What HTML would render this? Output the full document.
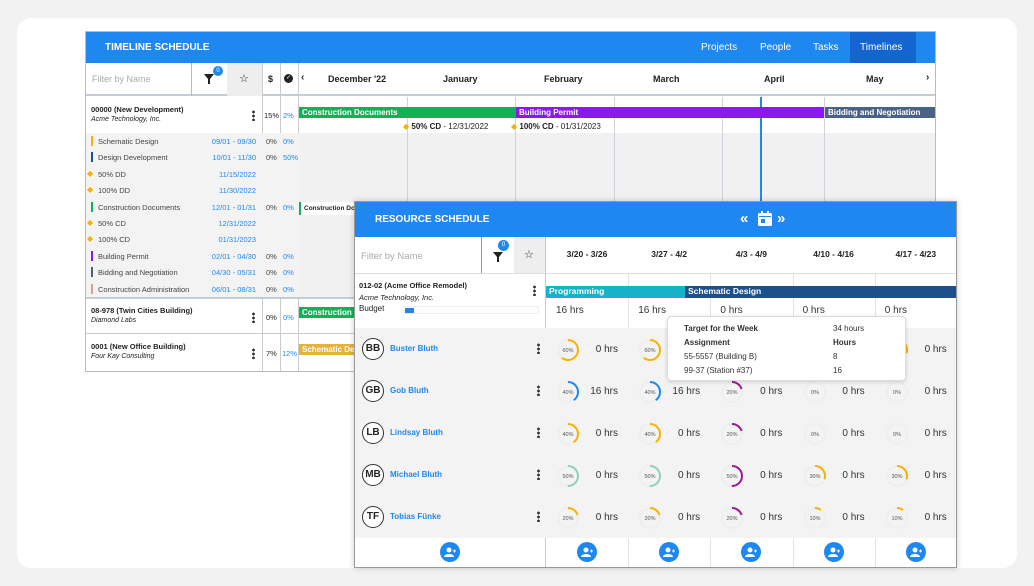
<!DOCTYPE html>
<html><head><meta charset="utf-8"><style>
*{box-sizing:border-box;margin:0;padding:0}
body{width:1034px;height:586px;background:#f2f2f2;font-family:"Liberation Sans",sans-serif;position:relative;overflow:hidden;color:#222}
.a{position:absolute}
.card{left:17px;top:18px;width:1000px;height:550px;background:#fff;border-radius:14px}
.tl{left:85px;top:31px;width:851px;height:341px;background:#fff;border:1px solid #bbb;overflow:hidden}
.hdr{background:#1e88f0;color:#fff}
.b{font-weight:bold}
.sm{font-size:8px}
.blue{color:#1e88f0}
.vl{width:1px;background:#ccd3dc}
.bar{height:11px;color:#fff;font-size:8px;font-weight:bold;line-height:11px;padding-left:3px;white-space:nowrap;overflow:hidden}
.rs{left:354px;top:201px;width:603px;height:367px;background:#fff;border:1px solid #999;box-shadow:0 0 6px rgba(0,0,0,.2);overflow:hidden}
.av{width:22px;height:22px;border:1px solid #333;border-radius:50%;font-size:10px;font-weight:bold;text-align:center;line-height:20px;background:#fff}
.add{width:20px;height:20px;border-radius:50%;background:#1e88f0}
.dots{width:3px;height:11px;background:radial-gradient(circle,#333 1.3px,transparent 1.5px) 0 0/3px 4px repeat-y}
.hrs{font-size:10px;color:#333}
</style></head><body>
<div class="a card"></div>

<!-- TIMELINE -->
<div class="a tl">
 <div class="a hdr" style="left:0;top:0;width:849px;height:31px">
  <div class="a b" style="left:19px;top:10px;font-size:10px">TIMELINE SCHEDULE</div>
  <div class="a" style="left:615px;top:10px;font-size:10px">Projects</div>
  <div class="a" style="left:674px;top:10px;font-size:10px">People</div>
  <div class="a" style="left:727px;top:10px;font-size:10px">Tasks</div>
  <div class="a" style="left:764px;top:0;width:66px;height:31px;background:#1565d0"></div>
  <div class="a" style="left:774px;top:10px;font-size:10px">Timelines</div>
 </div>
 <div class="a" style="left:0;top:31px;width:849px;height:33px;border-bottom:2px solid #c6ccd4"></div>
 <div class="a" style="left:6px;top:42px;font-size:9px;color:#aaa">Filter by Name</div>
 <div class="a" style="left:105px;top:31px;width:1px;height:33px;background:#bbb"></div>
 <div class="a" style="left:141px;top:31px;width:35px;height:33px;background:#eee"></div>
 <svg class="a" style="left:118px;top:42px" width="10" height="10"><path d="M0 0h10L6 5v5H4V5z" fill="#222"/></svg>
 <div class="a" style="left:127px;top:34px;width:10px;height:10px;border-radius:50%;background:#1e88f0;color:#fff;font-size:6px;text-align:center;line-height:10px">0</div>
 <div class="a" style="left:153px;top:40px;font-size:11px">☆</div>
 <div class="a" style="left:176px;top:31px;width:1px;height:310px;background:#ccc"></div>
 <div class="a b" style="left:182px;top:42px;font-size:9px">$</div>
 <div class="a" style="left:194px;top:31px;width:1px;height:310px;background:#ccc"></div>
 <div class="a" style="left:198px;top:42px;width:9px;height:9px;border-radius:50%;background:#222;color:#fff;font-size:6px;line-height:9px;text-align:center">✓</div>
 <div class="a" style="left:212px;top:31px;width:1px;height:310px;background:#ccc"></div>
 <div class="a b" style="left:215px;top:40px;font-size:10px">‹</div>
 <div class="a b" style="left:242px;top:42px;font-size:9px">December '22</div>
 <div class="a b" style="left:357px;top:42px;font-size:9px">January</div>
 <div class="a b" style="left:458px;top:42px;font-size:9px">February</div>
 <div class="a b" style="left:567px;top:42px;font-size:9px">March</div>
 <div class="a b" style="left:678px;top:42px;font-size:9px">April</div>
 <div class="a b" style="left:780px;top:42px;font-size:9px">May</div>
 <div class="a b" style="left:840px;top:40px;font-size:10px">›</div>
 <!-- body -->
 <div class="a" style="left:0;top:101px;width:849px;height:165px;background:#f3f3f3"></div>
 <div class="a" style="left:213px;top:101px;width:636px;height:165px;background:#f1f1f1"></div>
 <div class="a" style="left:0;top:265px;width:849px;height:2px;background:#c6ccd4"></div>
 <div class="a" style="left:0;top:301px;width:849px;height:1px;background:#c6ccd4"></div>
 <div class="a vl" style="left:321px;top:65px;height:235px"></div>
 <div class="a vl" style="left:429px;top:65px;height:235px"></div>
 <div class="a vl" style="left:528px;top:65px;height:235px"></div>
 <div class="a vl" style="left:636px;top:65px;height:235px"></div>
 <div class="a vl" style="left:738px;top:65px;height:235px"></div>
 <div class="a" style="left:674px;top:65px;width:2px;height:110px;background:#1e88f0"></div>
 <div class="a bar" style="left:213px;top:75px;width:217px;background:#10b256">Construction Documents</div>
 <div class="a bar" style="left:430px;top:75px;width:308px;background:#8a19f0">Building Permit</div>
 <div class="a bar" style="left:739px;top:75px;width:110px;background:#4a6384">Bidding and Negotiation</div>
 <div class="a sm" style="left:317px;top:90px"><span style="color:#f8b100">◆</span> <b>50% CD</b> - 12/31/2022</div>
 <div class="a sm" style="left:425px;top:90px"><span style="color:#f8b100">◆</span> <b>100% CD</b> - 01/31/2023</div>
 <div class="a" style="left:213px;top:170px;width:55px;height:13px;background:#fff;border-left:2px solid #10b256;font-size:6.5px;font-weight:bold;line-height:13px;padding-left:3px;overflow:hidden;white-space:nowrap">Construction Do</div>
 <div class="a bar" style="left:213px;top:275px;width:55px;background:#10b256">Construction</div>
 <div class="a bar" style="left:213px;top:312px;width:55px;background:#e5b03c">Schematic De</div>
 <!-- left rows -->
 <div class="a b" style="left:5px;top:73px;font-size:7.5px">00000 (New Development)</div>
 <div class="a" style="left:5px;top:84px;font-size:7px;font-style:italic">Acme Technology, Inc.</div>
 <div class="a dots" style="left:166px;top:78px"></div>
 <div class="a" style="left:178px;top:79px;font-size:7.5px">15%</div><div class="a blue" style="left:197px;top:79px;font-size:7.5px">2%</div>
 <div class="a b" style="left:5px;top:274px;font-size:7.5px">08-978 (Twin Cities Building)</div>
 <div class="a" style="left:5px;top:285px;font-size:7px;font-style:italic">Diamond Labs</div>
 <div class="a dots" style="left:166px;top:280px"></div>
 <div class="a" style="left:180px;top:281px;font-size:7.5px">0%</div><div class="a blue" style="left:197px;top:281px;font-size:7.5px">0%</div>
 <div class="a b" style="left:5px;top:310px;font-size:7.5px">0001 (New Office Building)</div>
 <div class="a" style="left:5px;top:321px;font-size:7px;font-style:italic">Four Kay Consulting</div>
 <div class="a dots" style="left:166px;top:316px"></div>
 <div class="a" style="left:180px;top:317px;font-size:7.5px">7%</div><div class="a blue" style="left:196px;top:317px;font-size:7.5px">12%</div>
 <div id="sub"></div>
</div>

<!-- RESOURCE -->
<div class="a rs">
 <div class="a hdr" style="left:0;top:0;width:601px;height:35px">
  <div class="a b" style="left:20px;top:12px;font-size:10px">RESOURCE SCHEDULE</div>
  <div class="a b" style="left:385px;top:8px;font-size:15px">«</div>
  <svg class="a" style="left:403px;top:9px" width="14" height="15"><rect x="0" y="2" width="14" height="13" rx="1.5" fill="#fff"/><rect x="3" y="0" width="2" height="4" fill="#fff"/><rect x="9" y="0" width="2" height="4" fill="#fff"/><rect x="1" y="5" width="12" height="1" fill="#1e88f0"/><rect x="3" y="8" width="4" height="4" fill="#1e88f0"/></svg>
  <div class="a b" style="left:422px;top:8px;font-size:15px">»</div>
 </div>
 <div class="a" style="left:0;top:35px;width:601px;height:37px;border-bottom:1px solid #ddd"></div>
 <div class="a" style="left:6px;top:49px;font-size:9.5px;color:#aaa">Filter by Name</div>
 <div class="a" style="left:126px;top:35px;width:1px;height:36px;background:#999"></div>
 <div class="a" style="left:159px;top:35px;width:31px;height:36px;background:#eee"></div>
 <svg class="a" style="left:138px;top:50px" width="10" height="10"><path d="M0 0h10L6 5v5H4V5z" fill="#222"/></svg>
 <div class="a" style="left:143px;top:38px;width:11px;height:11px;border-radius:50%;background:#1e88f0;color:#fff;font-size:6px;text-align:center;line-height:11px">0</div>
 <div class="a" style="left:169px;top:46px;font-size:11px">☆</div>
 <div class="a" style="left:190px;top:35px;width:1px;height:330px;background:#ccc"></div>
 <div id="wk"></div>
 <div class="a b" style="left:4px;top:79px;font-size:7.5px">012-02 (Acme Office Remodel)</div>
 <div class="a" style="left:4px;top:91px;font-size:7.5px;font-style:italic">Acme Technology, Inc.</div>
 <div class="a" style="left:4px;top:102px;font-size:8px">Budget</div>
 <div class="a" style="left:48px;top:104px;width:136px;height:8px;border:1px solid #eee"></div>
 <div class="a" style="left:50px;top:106px;width:9px;height:5px;background:#1e88f0"></div>
 <div class="a dots" style="left:178px;top:83px"></div>
 <div class="a" style="left:0;top:126px;width:601px;height:210px;background:#f3f3f3"></div>
 <div class="a bar" style="left:191px;top:84px;width:139px;height:12px;background:#17b2c9;font-size:8.5px">Programming</div>
 <div class="a bar" style="left:330px;top:84px;width:271px;height:12px;background:#1d4f8a;font-size:8.5px">Schematic Design</div>
 <div id="grid"></div>
 <!-- tooltip -->
 <div class="a" style="left:312px;top:114px;width:239px;height:65px;background:#fff;border:1px solid #ddd;border-radius:4px;box-shadow:0 1px 4px rgba(0,0,0,.15);font-size:8px;color:#333">
  <div class="a b" style="left:16px;top:7px">Target for the Week</div><div class="a" style="left:165px;top:7px">34 hours</div>
  <div class="a b" style="left:16px;top:21px">Assignment</div><div class="a b" style="left:165px;top:21px">Hours</div>
  <div class="a" style="left:16px;top:35px">55-5557 (Building B)</div><div class="a" style="left:165px;top:35px">8</div>
  <div class="a" style="left:16px;top:49px">99-37 (Station #37)</div><div class="a" style="left:165px;top:49px">16</div>
 </div>
</div>

<script>
var s='',rows=[["Schematic Design","#f8b100","09/01 - 09/30",1,"0%"],["Design Development","#1d4f8a","10/01 - 11/30",1,"50%"],["50% DD","","11/15/2022",0],["100% DD","","11/30/2022",0],["Construction Documents","#10b256","12/01 - 01/31",1,"0%"],["50% CD","","12/31/2022",0],["100% CD","","01/31/2023",0],["Building Permit","#8a19f0","02/01 - 04/30",1,"0%"],["Bidding and Negotiation","#4a6384","04/30 - 05/31",1,"0%"],["Construction Administration","#d9a090","06/01 - 08/31",1,"0%"]];
rows.forEach(function(r,i){var y=104+i*16.4;
 if(r[1])s+='<div class="a" style="left:5px;top:'+(y)+'px;width:2px;height:10px;background:'+r[1]+'"></div><div class="a" style="left:12px;top:'+(y+1)+'px;font-size:7.5px;color:#444">'+r[0]+'</div>';
 else s+='<div class="a" style="left:1px;top:'+(y)+'px;font-size:8px;color:#f8b100">◆</div><div class="a" style="left:12px;top:'+(y+1)+'px;font-size:7.5px;color:#444">'+r[0]+'</div>';
 s+='<div class="a blue" style="right:679px;top:'+(y+1)+'px;font-size:7.5px;white-space:nowrap">'+r[2]+'</div>';
 if(r[3])s+='<div class="a" style="left:180px;top:'+(y+1)+'px;font-size:7.5px;color:#444">0%</div><div class="a blue" style="left:197px;top:'+(y+1)+'px;font-size:7.5px">'+r[4]+'</div>';});
document.getElementById('sub').outerHTML=s;
var w='',wk=["3/20 - 3/26","3/27 - 4/2","4/3 - 4/9","4/10 - 4/16","4/17 - 4/23"];
wk.forEach(function(t,i){var x=191+i*82.2;w+='<div class="a b" style="left:'+x+'px;top:47px;width:82px;text-align:center;font-size:8.5px">'+t+'</div>';if(i)w+='<div class="a" style="left:'+x+'px;top:72px;width:1px;height:294px;background:#e2e2e2"></div>';
 w+='<div class="a hrs" style="left:'+(x+10)+'px;top:103px">'+(i<2?'16 hrs':'0 hrs')+'</div>';});
document.getElementById('wk').outerHTML=w;
var ppl=[["BB","Buster Bluth"],["GB","Gob Bluth"],["LB","Lindsay Bluth"],["MB","Michael Bluth"],["TF","Tobias Fünke"]];
var d=[[[60,"#f8b100","0 hrs"],[60,"#f8b100",""],[0,"#eee",""],[0,"#eee",""],[30,"#f8b100","0 hrs"]],
[[40,"#1e88f0","16 hrs"],[40,"#1e88f0","16 hrs"],[20,"#9b1a8f","0 hrs"],[0,"#eee","0 hrs"],[0,"#eee","0 hrs"]],
[[40,"#f8b100","0 hrs"],[40,"#f8b100","0 hrs"],[20,"#9b1a8f","0 hrs"],[0,"#eee","0 hrs"],[0,"#eee","0 hrs"]],
[[50,"#8fd0c0","0 hrs"],[50,"#8fd0c0","0 hrs"],[50,"#9b1a8f","0 hrs"],[30,"#f8b100","0 hrs"],[30,"#f8b100","0 hrs"]],
[[20,"#f8b100","0 hrs"],[20,"#f8b100","0 hrs"],[20,"#9b1a8f","0 hrs"],[10,"#f8b100","0 hrs"],[10,"#f8b100","0 hrs"]]];
var g='';
ppl.forEach(function(p,i){var y=126+i*42;
 g+='<div class="a av" style="left:7px;top:'+(y+10)+'px">'+p[0]+'</div><div class="a b blue" style="left:35px;top:'+(y+16)+'px;font-size:8px">'+p[1]+'</div><div class="a dots" style="left:182px;top:'+(y+15)+'px"></div>';
 d[i].forEach(function(c,j){var x=191+j*82.2,C=62.8;
  g+='<svg class="a" style="left:'+(x+10)+'px;top:'+(y+10)+'px" width="24" height="24"><circle cx="12" cy="12" r="10" fill="none" stroke="#eee" stroke-width="2"/><circle cx="12" cy="12" r="10" fill="none" stroke="'+c[1]+'" stroke-width="2" stroke-dasharray="'+(C*c[0]/100)+' 100" transform="rotate(-90 12 12)"/><text x="12" y="14" font-size="5.5" text-anchor="middle" fill="#555" font-family="Liberation Sans">'+c[0]+'%</text></svg>';
  if(c[2])g+='<div class="a hrs" style="left:'+(x+30)+'px;width:42px;text-align:right;top:'+(y+16)+'px">'+c[2]+'</div>';});});
for(var k=0;k<6;k++){var x=k==0?85:191+(k-1)*82.2+31;g+='<div class="a add" style="left:'+x+'px;top:340px"></div><svg class="a" style="left:'+(x+4)+'px;top:345px" width="12" height="10"><circle cx="5" cy="3" r="2.5" fill="#fff"/><path d="M0 10c0-4 10-4 10 0z" fill="#fff"/><path d="M9 4h3M10.5 2.5v3" stroke="#fff" stroke-width="1"/></svg>';}
document.getElementById('grid').outerHTML=g;
</script>
</body></html>
